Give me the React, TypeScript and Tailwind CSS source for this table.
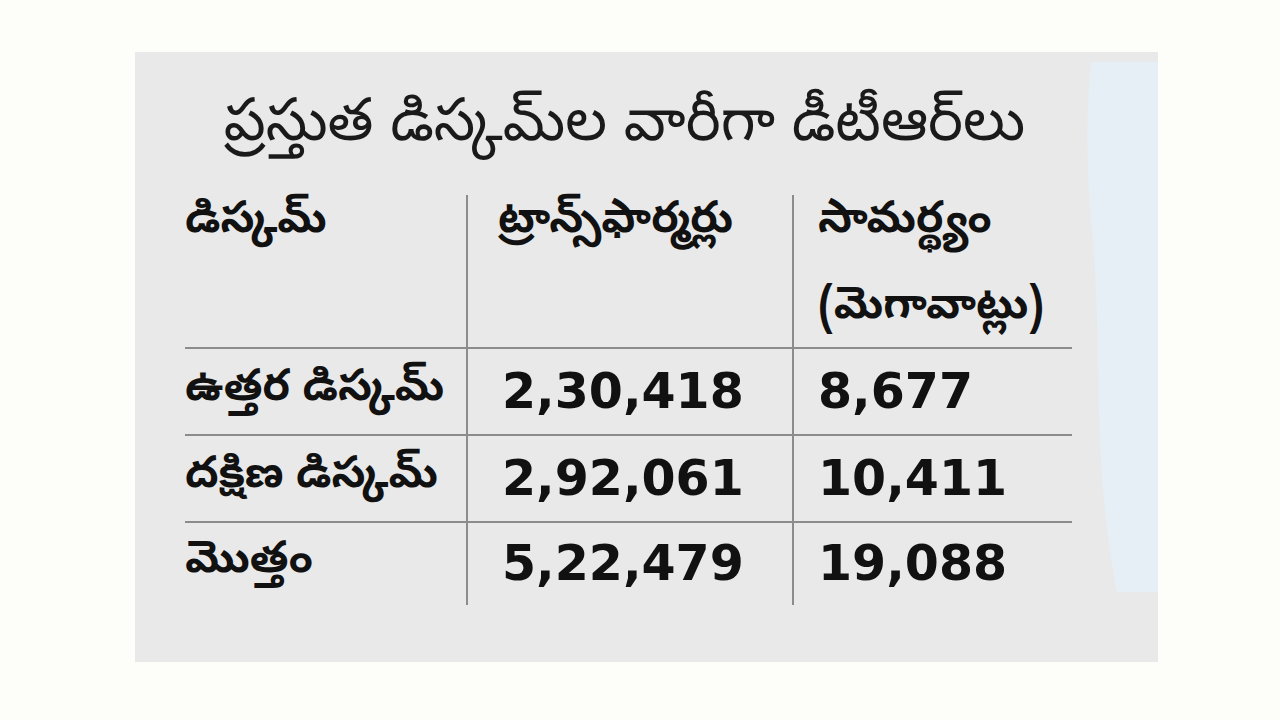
import React from "react";

const rows = [
  { name: "ఉత్తర డిస్కమ్", units: "2,30,418", mw: "8,677" },
  { name: "దక్షిణ డిస్కమ్", units: "2,92,061", mw: "10,411" },
  { name: "మొత్తం", units: "5,22,479", mw: "19,088" },
];

const te = { fontFamily: '"Noto Sans Telugu", "Noto Sans", sans-serif' };
const num = { fontFamily: '"DejaVu Sans", sans-serif' };

export default function App() {
  return (
    <div className="w-[1280px] h-[720px] bg-[#fdfdf9] pt-[52px] pl-[135px]">
      <div className="relative w-[1023px] h-[610px] bg-[#e9e9e9] overflow-hidden">
        {/* pale blue strip on the right edge */}
        <svg className="absolute right-0 top-[10px]" width="75" height="530" viewBox="0 0 75 530">
          <path d="M8 0 C2 60 4 120 10 180 C16 250 14 330 18 400 C22 460 28 500 34 530 L75 530 L75 0 Z" fill="#e5eff5" />
        </svg>

        <div className="relative flex flex-col items-center pr-[44px]">
          <h1 className="mt-[37px] text-[59px] leading-[80px] text-[#1a1a1a] font-normal" style={te}>
            ప్రస్తుత డిస్కమ్‌ల వారీగా డీటీఆర్‌లు
          </h1>
        </div>

        <div className="relative ml-[50px] mt-[26px] w-[887px] text-[#111]">
          <div className="flex h-[154px] border-b-2 border-[#8c8c8c]">
            <div className="w-[281px] pt-[2px] text-[44px] font-bold leading-[54px]" style={te}>డిస్కమ్</div>
            <div className="w-[326px] border-l-2 border-[#8c8c8c] pl-[30px] pt-[2px] text-[44px] font-bold leading-[54px]" style={te}>
              ట్రాన్స్‌ఫార్మర్లు
            </div>
            <div className="flex-1 border-l-2 border-[#8c8c8c] pl-[24px] pt-[2px] text-[44px] font-bold leading-[54px]" style={te}>
              <div>సామర్థ్యం</div>
              <div className="mt-[32px]">(మెగావాట్లు)</div>
            </div>
          </div>
          {rows.map((r, i) => (
            <div
              key={r.name}
              className={`flex items-center ${i < rows.length - 1 ? "h-[87px] border-b-2 border-[#8c8c8c]" : "h-[82px]"}`}
            >
              <div className="w-[281px] text-[44px] font-bold" style={te}>{r.name}</div>
              <div className="w-[326px] h-full flex items-center border-l-2 border-[#8c8c8c] pl-[34px] text-[49px] font-bold" style={num}>
                {r.units}
              </div>
              <div className="flex-1 h-full flex items-center border-l-2 border-[#8c8c8c] pl-[24px] text-[49px] font-bold" style={num}>
                {r.mw}
              </div>
            </div>
          ))}
        </div>
      </div>
    </div>
  );
}
